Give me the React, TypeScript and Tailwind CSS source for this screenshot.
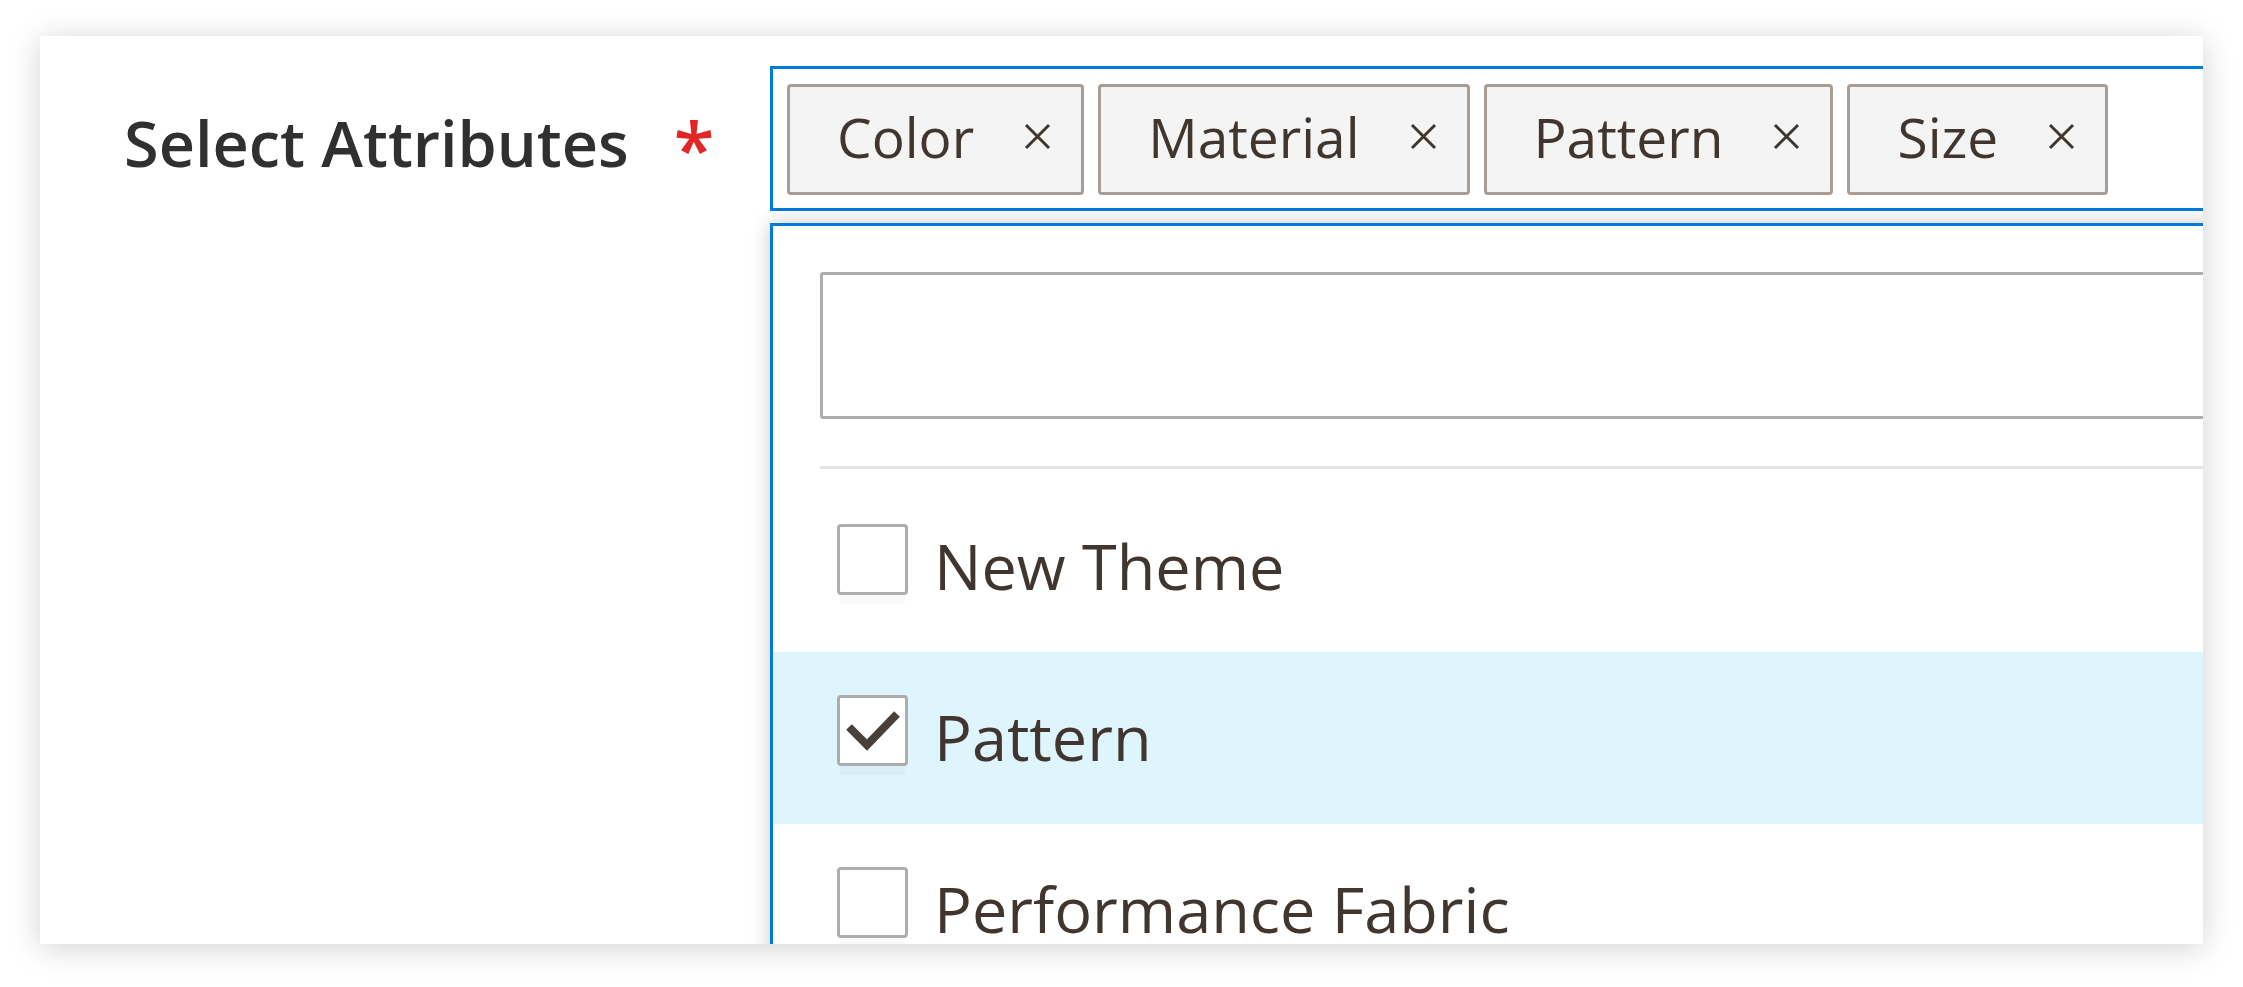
import React from "react";

const tags = ["Color", "Material", "Pattern", "Size"];

const options = [
  { label: "New Theme", checked: false },
  { label: "Pattern", checked: true },
  { label: "Performance Fabric", checked: false },
];

function RemoveIcon() {
  return (
    <svg width="27" height="27" viewBox="0 0 27 27" fill="none" stroke="#41362f" strokeWidth="3">
      <path d="M2 2L25 25M25 2L2 25" />
    </svg>
  );
}

function Checkbox({ checked }: { checked: boolean }) {
  return (
    <span className="mt-[43px] flex h-[71px] w-[71px] shrink-0 items-center justify-center rounded-[4px] border-[3px] border-[#adadad] bg-white shadow-[0_12px_0_-3px_rgba(0,0,0,0.025)]">
      {checked && (
        <svg width="65" height="65" viewBox="0 0 65 65" fill="none" stroke="#4a403a" strokeWidth="8" strokeLinejoin="miter">
          <path d="M9 29L27 47L57 16" />
        </svg>
      )}
    </span>
  );
}

function Tag({ label }: { label: string }) {
  return (
    <div className="flex h-[111px] shrink-0 items-center gap-[50px] rounded-[4px] border-[3px] border-[#a79d95] bg-[#f4f4f4] pb-[6px] pl-[47px] pr-[30px]">
      <span className="text-[55px] leading-none text-[#41362f]">{label}</span>
      <RemoveIcon />
    </div>
  );
}

export default function App() {
  return (
    <div className="h-[987px] w-[2243px] overflow-hidden bg-white pl-[40px] pt-[36px] font-['Open_Sans','Liberation_Sans',sans-serif]">
      <div className="flex h-[908px] w-[2163px] items-start overflow-hidden bg-white shadow-[0_4px_30px_rgba(0,0,0,0.18)]">
        {/* field label */}
        <div className="flex w-[730px] shrink-0 items-start pl-[84px] pt-[75px]">
          <span className="text-[63px] font-semibold leading-none text-[#303030]">Select Attributes</span>
          <span className="ml-[45px] text-[74px] font-semibold leading-none text-[#e22626]">*</span>
        </div>

        {/* multiselect control */}
        <div className="mt-[30px] w-[1600px] shrink-0">
          <div className="flex gap-[14px] border-[3px] border-[#007bdb] bg-white px-[14px] pb-[13px] pt-[15px]">
            {tags.map((t) => (
              <Tag key={t} label={t} />
            ))}
          </div>

          <div className="mt-[12px] border-[3px] border-[#007bdb] bg-white shadow-[0_0_18px_rgba(0,0,0,0.22)]">
            <div className="px-[47px] pt-[46px]">
              <input
                type="text"
                className="block h-[147px] w-full rounded-[3px] border-[3px] border-[#adadad] bg-white outline-none"
              />
              <div className="mt-[47px] h-[3px] bg-[#e3e3e3]" />
            </div>

            <ul className="mt-[12px]">
              {options.map((o) => (
                <li
                  key={o.label}
                  className={
                    o.checked
                      ? "flex h-[172px] items-start bg-[#def5fd] pl-[64px]"
                      : "flex h-[171px] items-start pl-[64px]"
                  }
                >
                  <Checkbox checked={o.checked} />
                  <span className="ml-[26px] mt-[53px] text-[63px] leading-none text-[#41362f]">{o.label}</span>
                </li>
              ))}
            </ul>
          </div>
        </div>
      </div>
    </div>
  );
}
